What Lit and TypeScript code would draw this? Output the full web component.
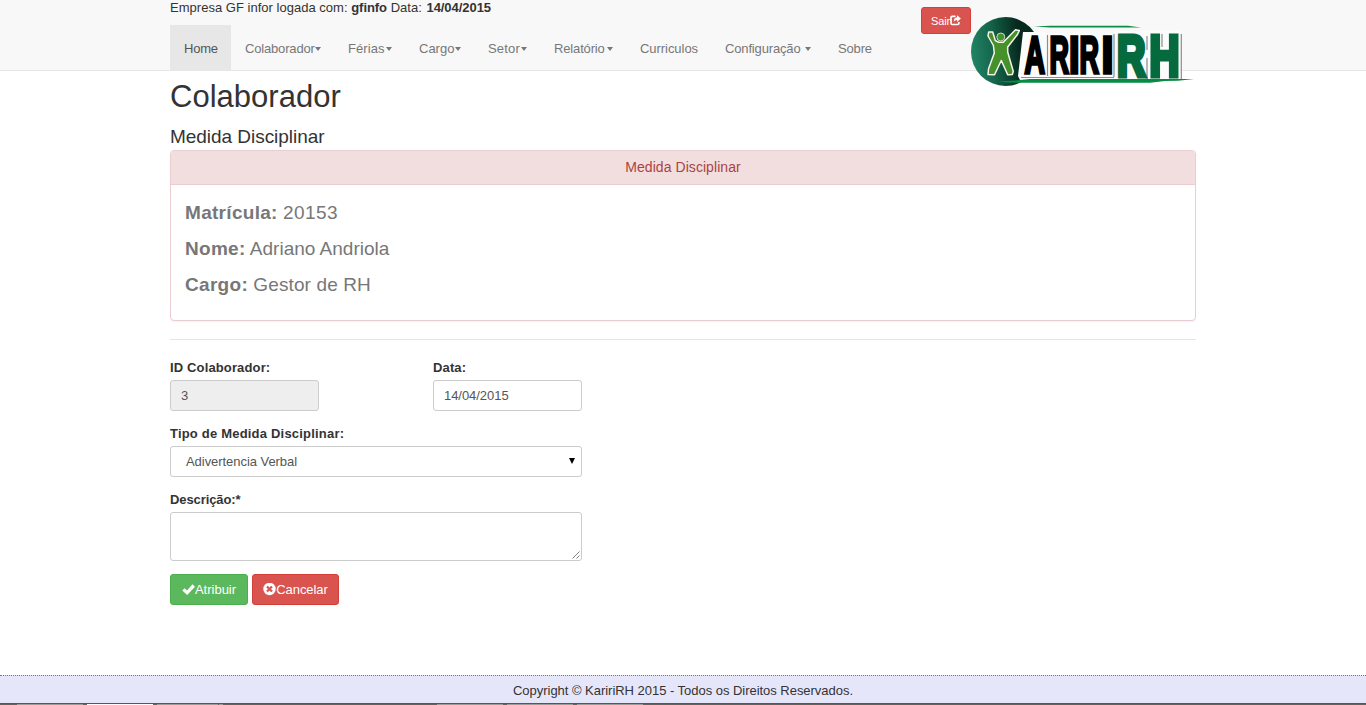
import { LitElement, html, css, svg, nothing } from "lit";

interface NavItem { label: string; width: number; spacing: number; caret?: boolean; gap?: number; active?: boolean }

const NAV: NavItem[] = [
  { label: "Home", width: 61, spacing: -0.2, active: true },
  { label: "Colaborador", width: 103, spacing: -0.17, caret: true, gap: 0 },
  { label: "Férias", width: 71, spacing: 0.1, caret: true, gap: 1 },
  { label: "Cargo", width: 69, spacing: 0, caret: true, gap: 1 },
  { label: "Setor", width: 66, spacing: 0.2, caret: true, gap: 1 },
  { label: "Relatório", width: 86, spacing: -0.15, caret: true, gap: 2 },
  { label: "Curriculos", width: 85, spacing: -0.05 },
  { label: "Configuração", width: 113, spacing: -0.15, caret: true, gap: 4 },
  { label: "Sobre", width: 62, spacing: -0.15 },
];

const LETTERS: [string, number, number][] = [
  ["A", 1024.5, 20.5], ["R", 1049.5, 19.5], ["I", 1069, 10.5], ["R", 1079.5, 19.5], ["I", 1101.5, 12],
];

class KaririLogo extends LitElement {
  static styles = css`
    :host { display: block; width: 226px; height: 78px; }
    svg { display: block; }
    text { font-family: "Liberation Sans", Arial, sans-serif; font-weight: 700; }
    .black { font-size: 51px; fill: #000; stroke: #000; stroke-width: 3.4px; }
    .green { font-size: 58px; fill: #056b3f; stroke: #056b3f; stroke-width: 5px; }
    .shade { stroke: #8d8d8d; stroke-width: 1.2; fill: none; }
  `;
  render() {
    return html`<svg width="226" height="78" viewBox="970 12 226 78">
      <defs>
        <linearGradient id="disc" x1="0" y1="0.5" x2="1" y2="0.4">
          <stop offset="0" stop-color="#218464" /><stop offset=".3" stop-color="#15664c" />
          <stop offset=".7" stop-color="#06291d" /><stop offset="1" stop-color="#062d20" />
        </linearGradient>
      </defs>
      <circle cx="1005.5" cy="51.5" r="34.5" fill="url(#disc)" />
      <path d="M1034 26.5 L1050 25.8 H1128 L1141 27.6 H1050Z" fill="#0b8d45" />
      <path d="M1023 32 H1046 V33 H1114 V30.5 H1180.5 V80 H1020 L1018 76Z" fill="#fbfbfb" />
      <path class="shade" d="M1021 77.5 H1114 M1047.5 35 V76 M1114 34 V77 M1147 36 V50 M1147 58 V79 M1162 34 V47 M1181.3 34 V80" />
      <path d="M988.7 32 L992.7 32 L995.3 40.5 L998.7 42.3 H1003.3 L1015.5 29.8 L1019.3 30.6 L1017.5 34.5 L1007.7 47 V52 L1013.3 71.5 L1012.3 74.6 L1007.7 74.8 L1001.3 60.5 L994.5 74.8 L988 74.6 L988.5 69 L994.3 53 L993.4 45.5 L988 36Z"
        fill="#47912a" stroke="#f5f5ec" stroke-width="1.5" stroke-linejoin="round" />
      <circle cx="1000.8" cy="37" r="4" fill="#47912a" stroke="#e8f0df" stroke-width=".8" />
      ${LETTERS.map(([ch, x, w]) => svg`<text class="black" x=${x} y="72.5" textLength=${w} lengthAdjust="spacingAndGlyphs">${ch}</text>`)}
      <text class="green" x="1117" y="76" textLength="28.5" lengthAdjust="spacingAndGlyphs">R</text>
      <text class="green" x="1149.5" y="76" textLength="30" lengthAdjust="spacingAndGlyphs">H</text>
      <path d="M998 81.5 L1020 80 L1030 79 H1194 L1178 80.7 L1165 81 L1150 82.8 H1020 Q1008 83 998 81.5Z" fill="#078a43" />
    </svg>`;
  }
}
customElements.define("kariri-logo", KaririLogo);

const exitIcon = html`<svg class="ico" width="11" height="11" viewBox="0 0 11 11">
  <path d="M5.5 1.3H2.2Q1 1.3 1 2.5V8.2Q1 9.5 2.2 9.5H7.6Q8.9 9.5 8.9 8.2V7" fill="none" stroke="#fff" stroke-width="1.7" />
  <path d="M7 .2 L10.9 3.6 L7 7 V5 Q5 5 3.7 6.7 Q3.8 2.6 7 2.2Z" fill="#fff" /></svg>`;
const okIcon = html`<svg class="ico" width="13" height="13" viewBox="0 0 13 13">
  <path d="M.3 7.5 L2.6 5.2 L5 7.4 L10.5 1.3 L13 3.7 L5.2 12Z" fill="#fff" /></svg>`;
const removeIcon = html`<svg class="ico" width="13" height="13" viewBox="0 0 13 13">
  <circle cx="6.5" cy="6" r="6.2" fill="#fff" />
  <path d="M4 3.5 L9 8.5 M9 3.5 L4 8.5" stroke="#d9534f" stroke-width="2.2" /></svg>`;

/* Window buttons on the strip below the page: left edge, width, colour */
const TABS: [number, number, string][] = [
  [17, 66, "#9c9e99"], [87, 66, "#fafafa"], [157, 61, "#9c9e99"], [219, 4, "#9c9e99"],
  [437, 66, "#9c9e99"], [507, 66, "#9c9e99"], [577, 66, "#9c9e99"],
];

class AppRoot extends LitElement {
  static styles = css`
    :host { display: block; height: 705px; overflow: hidden; background: #fff; color: #333;
      font: 13px/19px "Liberation Sans", Arial, sans-serif; }
    * { box-sizing: border-box; }
    .page { display: flex; flex-direction: column; height: 705px; }
    .container { width: 1026px; margin: 0 auto; }
    header { height: 71px; background: #f8f8f8; border-bottom: 1px solid #e7e7e7; flex: none; }
    .bar { display: flex; align-items: flex-start; }
    .left { width: 751px; }
    .company { height: 25px; line-height: 15px; white-space: pre; letter-spacing: .02px; }
    .company b { letter-spacing: -.05px; }
    .company b:last-child { margin-left: 1px; }
    nav { display: flex; }
    .item { display: flex; align-items: center; height: 45px; padding: 2px 0 0 14px; color: #777; flex: none; }
    .item.active { background: #e7e7e7; color: #555; }
    .caret { border: 3.5px solid transparent; border-top: 4px solid #777; border-bottom: 0; margin-top: 1px; }
    .logo { flex: none; height: 70px; padding-top: 12px; margin-left: -1px; margin-right: -1px; position: relative; }
    .btn { display: inline-flex; align-items: center; justify-content: center; height: 31px; border: 1px solid; border-radius: 3px; color: #fff; white-space: nowrap; }
    .ico { flex: none; display: block; }
    .exit { width: 50px; height: 27px; margin-top: 7px; background: #d9534f; border-color: #d43f3a; font-size: 11px; }
    .exit span { letter-spacing: -.15px; margin-top: 1px; }
    .exit .ico { margin-top: -1px; }
    main { flex: 1; }
    h1 { font-size: 31px; line-height: 34px; font-weight: 400; margin: 9px 0 0; letter-spacing: .02px; }
    h2 { font-size: 19px; line-height: 21px; font-weight: 400; margin: 12px 0 3px; letter-spacing: -.04px; }
    .panel { height: 171px; border: 1px solid #ebccd1; border-radius: 4px; overflow: hidden; box-shadow: 0 1px 1px rgba(0,0,0,.05); }
    .head { height: 34px; line-height: 32px; background: #f2dede; border-bottom: 1px solid #ebccd1; color: #a94442; text-align: center; font-size: 14px; letter-spacing: .06px; }
    .rows { padding: 14px; color: #777; font-size: 19px; }
    .rows p { margin: 0 0 9px; line-height: 27px; white-space: pre; }
    .rows b { letter-spacing: .3px; }
    .num { letter-spacing: .4px; }
    .post { letter-spacing: .12px; }
    .rule { height: 1px; background: #e5e5e5; margin: 18px 0; }
    .fields { display: flex; gap: 114px; }
    label { display: block; font-weight: 700; height: 22px; line-height: 19px; letter-spacing: .14px; }
    .tipo { letter-spacing: .2px; }
    .desc { letter-spacing: -.1px; }
    .group { margin-bottom: 13px; }
    .control { height: 31px; border: 1px solid #ccc; border-radius: 3px; background: #fff; color: #555; line-height: 29px; padding: 0 10px; }
    .short { width: 149px; }
    .wide { width: 412px; }
    .off { background: #eee; }
    .select { display: flex; align-items: center; justify-content: space-between; padding: 0 6px 0 15px; }
    .arrow { width: 0; height: 0; border: 3.5px solid transparent; border-top: 6px solid #000; border-bottom: 0; margin-top: -1px; }
    .area { height: 49px; display: flex; align-items: flex-end; justify-content: flex-end; padding: 0 1px 1px 0; }
    .actions { display: flex; gap: 4px; }
    .ok { width: 78px; background: #5cb85c; border-color: #4cae4c; }
    .cancel { width: 87px; background: #d9534f; border-color: #d43f3a; letter-spacing: -.08px; }
    .date { letter-spacing: -.05px; }
    .type { letter-spacing: -.05px; }
    footer { height: 28px; background: #e6e6fa; border-top: 1px dotted #777; line-height: 30px; text-align: center; flex: none; letter-spacing: -.03px; }
    .strip { display: block; flex: none; }
  `;
  render() {
    return html`<div class="page">
      <header><div class="container bar">
        <div class="left">
          <div class="company">Empresa GF infor logada com: <b>gfinfo</b> Data: <b>14/04/2015</b></div>
          <nav>${NAV.map((n) => html`<div class="item ${n.active ? "active" : ""}" style="width:${n.width}px;letter-spacing:${n.spacing}px">${n.label}${n.caret ? html`<i class="caret" style="margin-left:${n.gap}px"></i>` : nothing}</div>`)}</nav>
        </div>
        <div class="btn exit"><span>Sair</span>${exitIcon}</div>
        <div class="logo"><kariri-logo></kariri-logo></div>
      </div></header>
      <main class="container">
        <h1>Colaborador</h1>
        <h2>Medida Disciplinar</h2>
        <div class="panel">
          <div class="head">Medida Disciplinar</div>
          <div class="rows">
            <p><b>Matrícula:</b> <span class="num">20153</span></p>
            <p><b>Nome:</b> Adriano Andriola</p>
            <p><b>Cargo:</b> <span class="post">Gestor de RH</span></p>
          </div>
        </div>
        <div class="rule"></div>
        <div class="fields">
          <div class="group"><label>ID Colaborador:</label><div class="control short off">3</div></div>
          <div class="group"><label>Data:</label><div class="control short date">14/04/2015</div></div>
        </div>
        <div class="group"><label class="tipo">Tipo de Medida Disciplinar:</label>
          <div class="control wide select"><span class="type">Adivertencia Verbal</span><i class="arrow"></i></div></div>
        <div class="group"><label class="desc">Descrição:*</label>
          <div class="control wide area"><svg width="8" height="8" viewBox="0 0 8 8"><path d="M.5 7.5 L7.5 .5 M4.5 7.5 L7.5 4.5" stroke="#777" stroke-width=".9" /></svg></div></div>
        <div class="actions">
          <div class="btn ok">${okIcon}<span>Atribuir</span></div>
          <div class="btn cancel">${removeIcon}<span>Cancelar</span></div>
        </div>
      </main>
      <footer>Copyright © KaririRH 2015 - Todos os Direitos Reservados.</footer>
      <svg class="strip" width="1366" height="2" viewBox="0 0 1366 2" shape-rendering="crispEdges">
        <rect width="1366" height="2" fill="#62645f" /><rect width="1366" height="1" fill="#55555b" />
        ${TABS.map(([x, w, c]) => svg`<rect x=${x} y="1" width=${w} height="1" fill=${c} />`)}
      </svg>
    </div>`;
  }
}
customElements.define("app-root", AppRoot);
